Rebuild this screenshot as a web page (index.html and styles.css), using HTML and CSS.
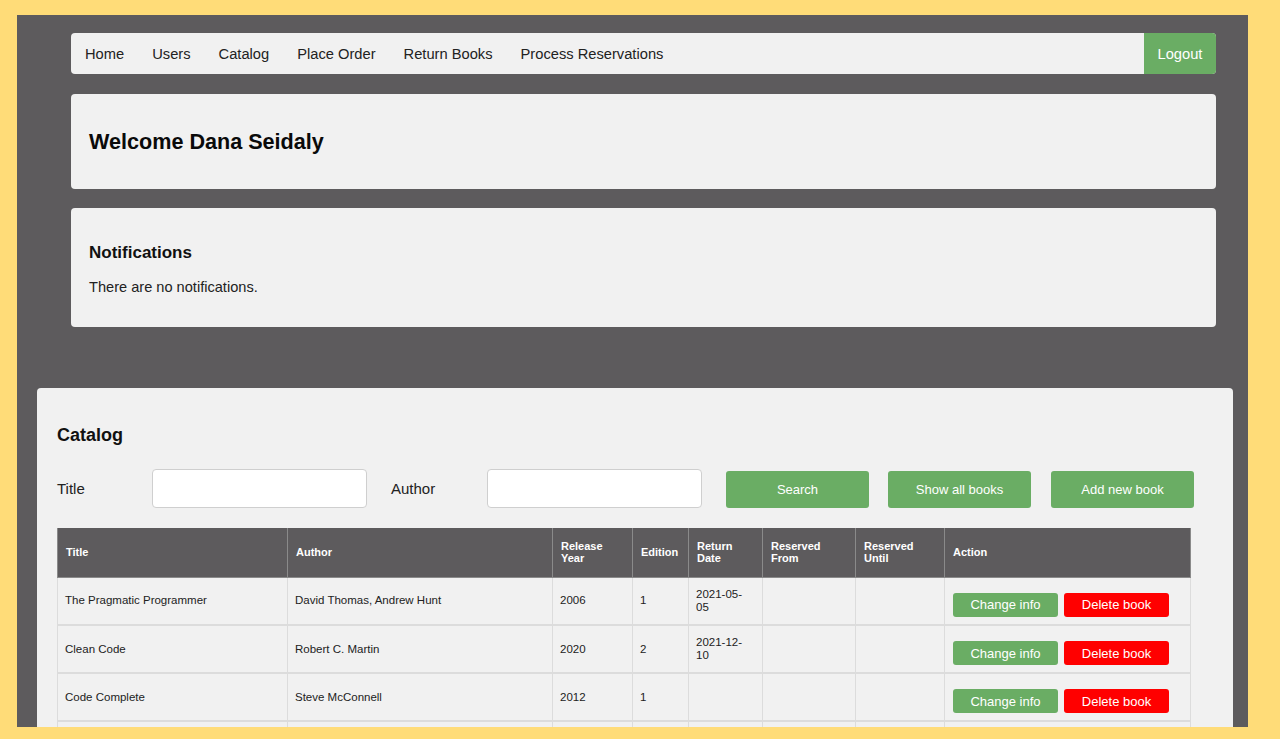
FILE: index.html
```html
<!DOCTYPE html>
<html>
<head>
<meta charset="utf-8">
<link rel="stylesheet" href="styles.css">
</head>
<body>
<div class="frame">
  <div class="top">
    <nav class="nav">
      <div class="links">
        <a href="#">Home</a>
        <a href="#">Users</a>
        <a href="#">Catalog</a>
        <a href="#">Place Order</a>
        <a href="#">Return Books</a>
        <a href="#">Process Reservations</a>
      </div>
      <a href="#" class="logout">Logout</a>
    </nav>
    <div class="card welcome"><h1>Welcome Dana Seidaly</h1></div>
    <div class="card notes">
      <h2>Notifications</h2>
      <p>There are no notifications.</p>
    </div>
  </div>
  <div class="catalog">
    <h2 class="cat-title">Catalog</h2>
    <div class="search">
      <label class="lbl-title">Title</label>
      <input type="text" class="inp">
      <label class="lbl-author">Author</label>
      <input type="text" class="inp">
      <button class="btn b-search">Search</button>
      <button class="btn b-show">Show all books</button>
      <button class="btn b-add">Add new book</button>
    </div>
    <table class="tbl">
      <thead>
        <tr>
          <th class="c1">Title</th>
          <th class="c2">Author</th>
          <th class="c3">Release Year</th>
          <th class="c4">Edition</th>
          <th class="c5">Return Date</th>
          <th class="c6">Reserved From</th>
          <th class="c7">Reserved Until</th>
          <th class="c8">Action</th>
        </tr>
      </thead>
      <tbody>
        <tr>
          <td>The Pragmatic Programmer</td><td>David Thomas, Andrew Hunt</td><td>2006</td><td>1</td><td>2021-05-05</td><td></td><td></td>
          <td class="act"><button class="sb green">Change info</button><button class="sb red">Delete book</button></td>
        </tr>
        <tr>
          <td>Clean Code</td><td>Robert C. Martin</td><td>2020</td><td>2</td><td>2021-12-10</td><td></td><td></td>
          <td class="act"><button class="sb green">Change info</button><button class="sb red">Delete book</button></td>
        </tr>
        <tr>
          <td>Code Complete</td><td>Steve McConnell</td><td>2012</td><td>1</td><td></td><td></td><td></td>
          <td class="act"><button class="sb green">Change info</button><button class="sb red">Delete book</button></td>
        </tr>
        <tr class="empty">
          <td></td><td></td><td></td><td></td><td></td><td></td><td></td><td></td>
        </tr>
      </tbody>
    </table>
  </div>
</div>
</body>
</html>
```

FILE: styles.css
```css
* { box-sizing: border-box; }
html, body { margin: 0; padding: 0; }
body {
  background: #ffdc78;
  font-family: "Liberation Sans", Arial, sans-serif;
  color: #111;
  height: 739px;
  overflow: hidden;
  padding: 15px 32px 0 17px;
}
.frame {
  background: #5d5b5d;
  width: 1231px;
  height: 712px;
  overflow: hidden;
  padding-top: 18px;
}
.top {
  margin: 0 32px 0 54px;
}
.nav {
  display: flex;
  justify-content: space-between;
  background: #f1f1f1;
  border-radius: 4px;
  height: 41px;
  overflow: hidden;
}
.links { display: flex; }
.nav a {
  display: flex;
  align-items: center;
  padding: 0 14px;
  font-size: 14.7px;
  color: #222;
  text-decoration: none;
}
.nav a.logout {
  background: #6aad64;
  color: #fff;
  padding: 0 14px;
  width: 72px;
  justify-content: center;
}
.card {
  background: #f1f1f1;
  border-radius: 4px;
  padding: 0 18px;
}
.welcome {
  margin-top: 20px;
  height: 95px;
  display: flex;
  align-items: center;
}
.welcome h1 {
  margin: 0;
  font-size: 21.6px;
  font-weight: bold;
  color: #0a0a0a;
}
.notes {
  margin-top: 19px;
  height: 119px;
  padding-top: 35px;
}
.notes h2 {
  margin: 0;
  font-size: 17px;
  line-height: 20px;
  font-weight: bold;
}
.notes p {
  margin: 15px 0 0;
  font-size: 14.6px;
  line-height: 18px;
  color: #222;
}
.catalog {
  margin: 61px 15px 0 20px;
  background: #f1f1f1;
  border-radius: 4px 4px 0 0;
  height: 400px;
  padding: 36px 0 0 20px;
}
.cat-title {
  margin: 0;
  font-size: 18px;
  line-height: 22px;
  font-weight: bold;
}
.search {
  display: flex;
  align-items: center;
  margin-top: 23px;
  height: 39px;
}
.search label {
  font-size: 15px;
  color: #222;
}
.lbl-title { width: 95px; }
.lbl-author { width: 96px; margin-left: 24px; }
.inp {
  width: 215px;
  height: 39px;
  border: 1px solid #cfcfcf;
  border-radius: 4px;
  background: #fff;
}
.btn {
  height: 37px;
  width: 143px;
  margin-top: 2px;
  border: none;
  border-radius: 3px;
  background: #6aad64;
  color: #fff;
  font-family: "Liberation Sans", Arial, sans-serif;
  font-size: 13px;
}
.b-search { margin-left: 24px; }
.b-show { margin-left: 19px; }
.b-add { margin-left: 20px; }
.tbl {
  margin-top: 20px;
  border-collapse: collapse;
  width: 1133px;
  table-layout: fixed;
  font-size: 11.5px;
}
.tbl th {
  background: #5d5b5d;
  color: #fff;
  font-weight: bold;
  font-size: 11px;
  text-align: left;
  height: 49px;
  padding: 0 8px;
  line-height: 12.5px;
  border: 1px solid #8a8a8a;
  border-top: none;
}
.tbl td {
  height: 48px;
  padding: 0 10px 0 7px;
  color: #222;
  border: 1px solid #dcdcdc;
  border-width: 0 1px 2px 1px;
  line-height: 13px;
  background: #f1f1f1;
}
.c1 { width: 230px; }
.c2 { width: 265px; }
.c3 { width: 80px; }
.c4 { width: 56px; }
.c5 { width: 74px; }
.c6 { width: 93px; }
.c7 { width: 89px; }
.c8 { width: 246px; }
.act { white-space: nowrap; padding-left: 8px; }
.tbl td.act { padding-left: 8px; }
.sb {
  height: 24px;
  width: 105px;
  border: none;
  border-radius: 3px;
  color: #fff;
  font-family: "Liberation Sans", Arial, sans-serif;
  font-size: 13px;
  vertical-align: middle;
  margin-top: 8px;
}
.sb.green { background: #6aad64; }
.sb.red { background: #ff0000; margin-left: 6px; }
```
